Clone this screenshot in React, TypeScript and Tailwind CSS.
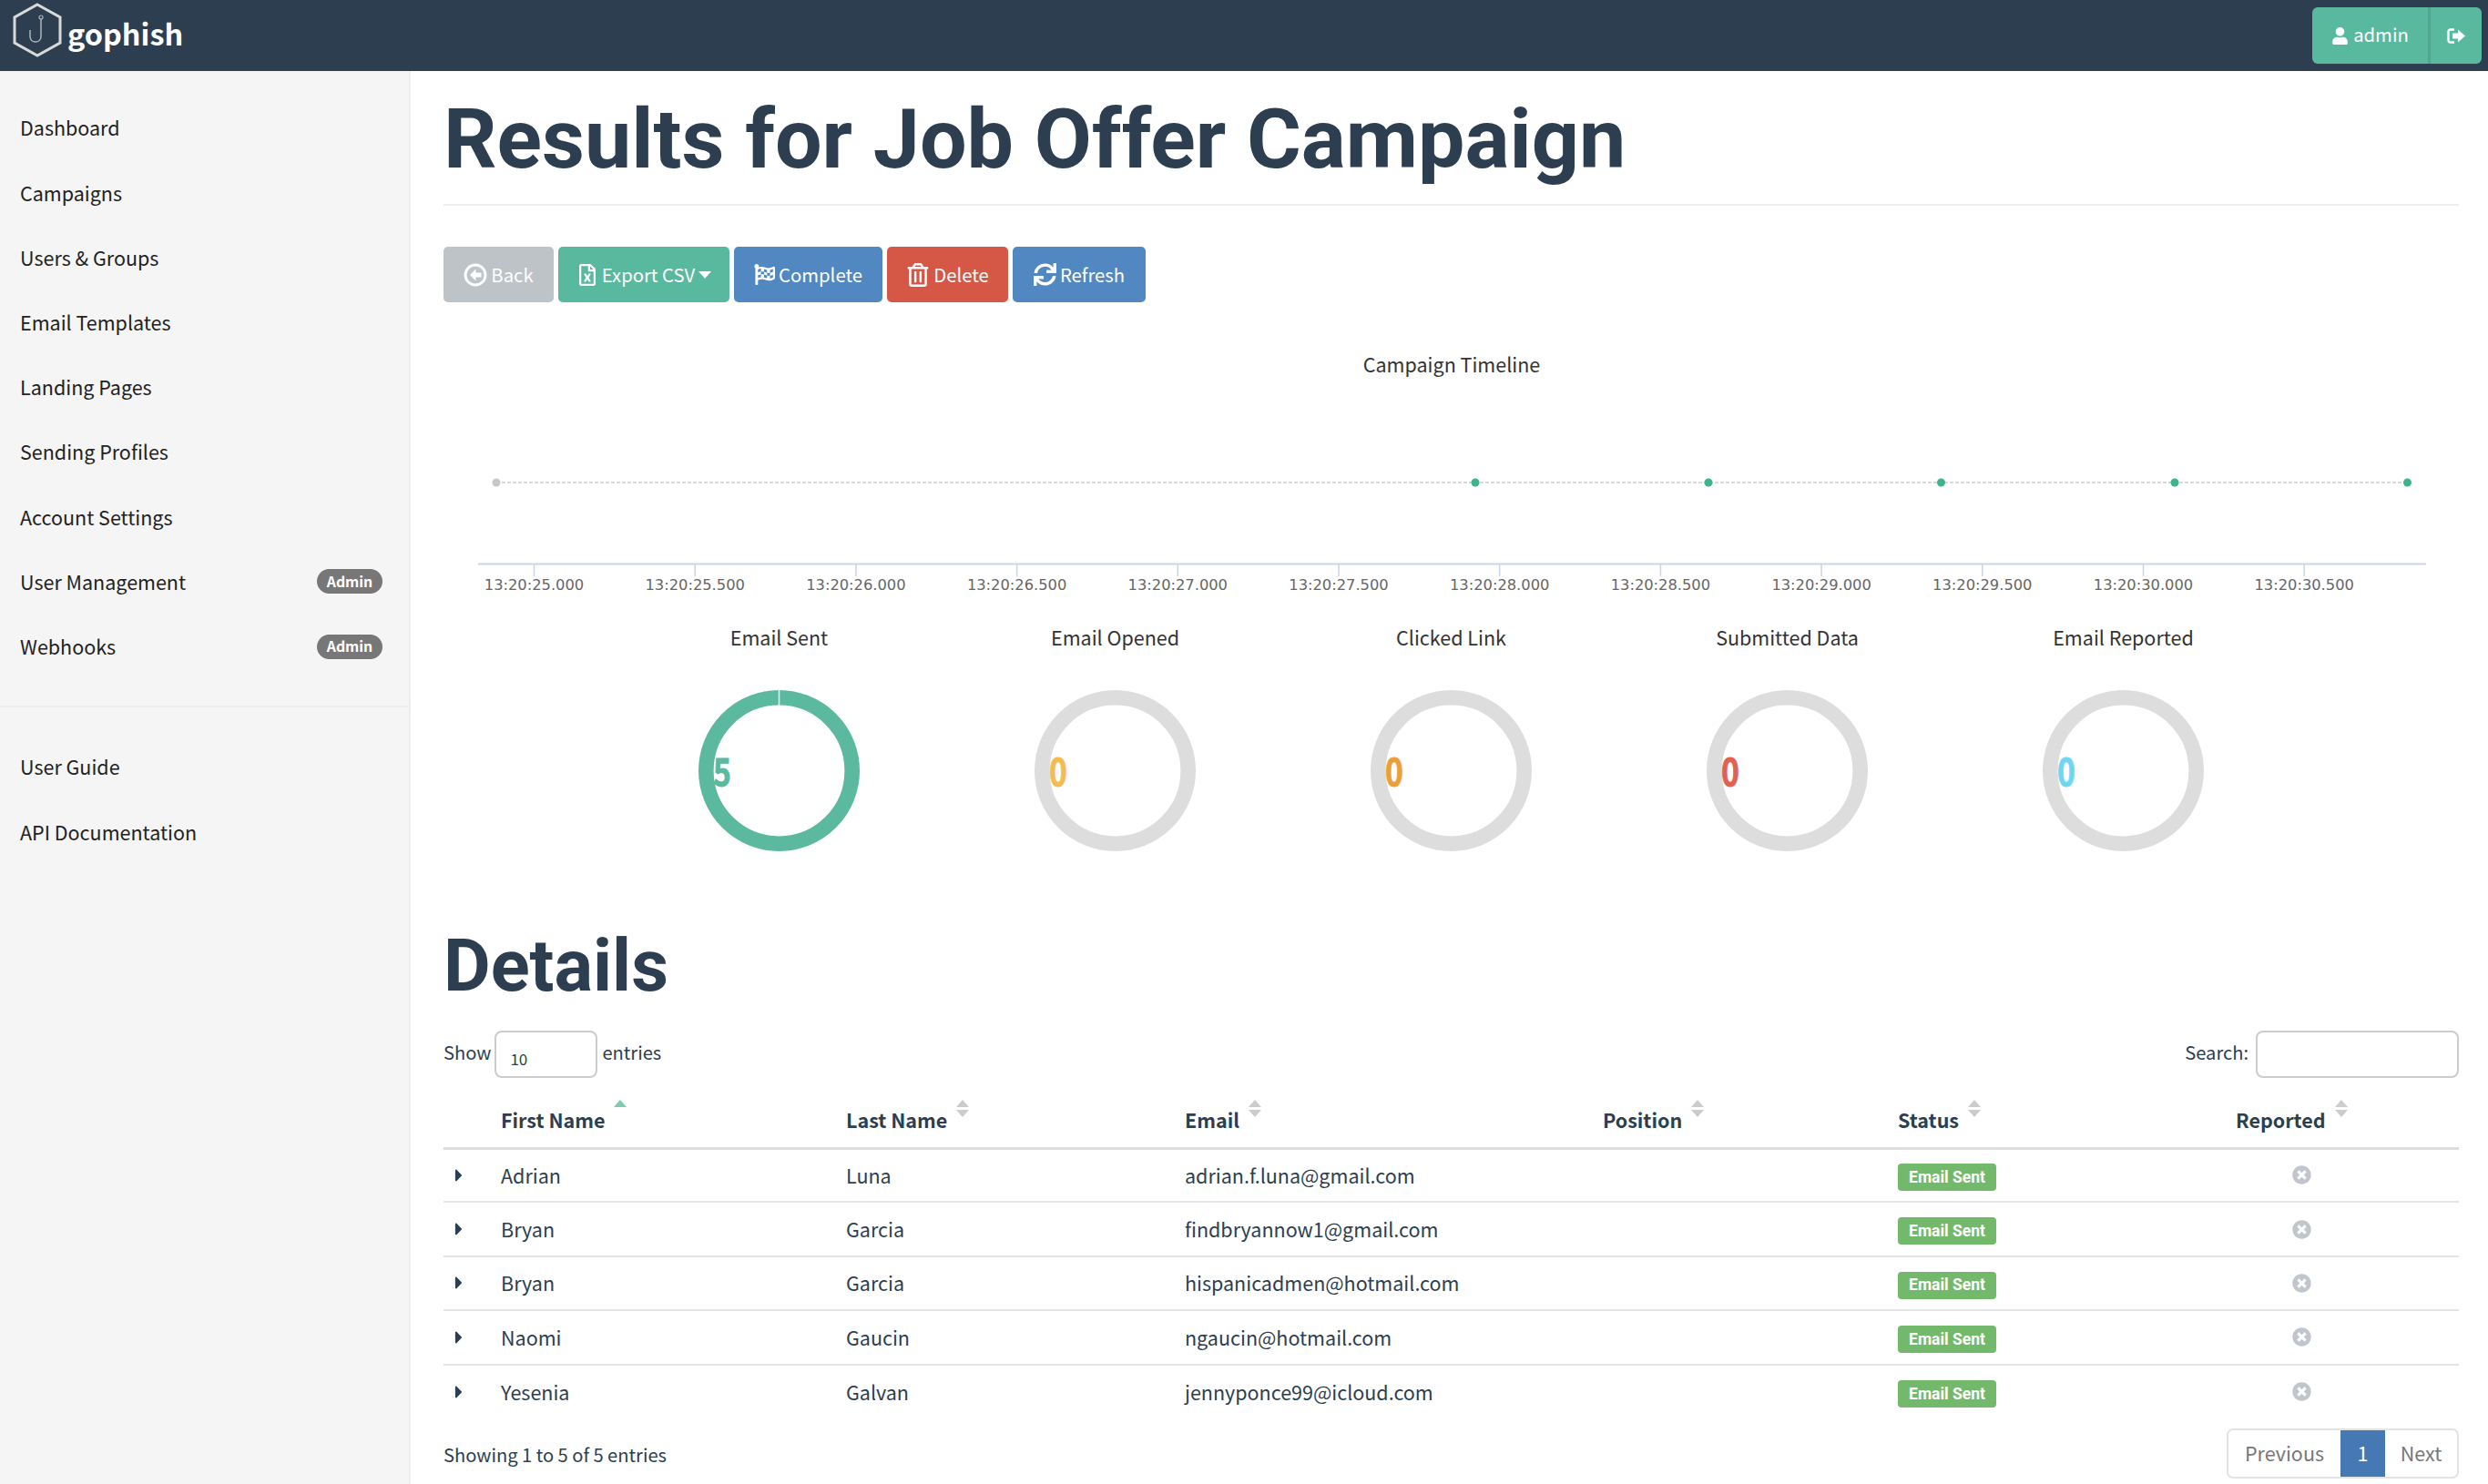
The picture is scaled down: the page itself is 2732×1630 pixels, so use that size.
import React from "react";
import { FaRegFileExcel, FaFlagCheckered, FaRegTrashAlt, FaSync, FaUser, FaTimesCircle, FaCaretRight } from "react-icons/fa";

const src = "font-['Noto_Sans_CJK_SC','Source_Sans_Pro',sans-serif]";

function Logo() {
  return (
    <svg width="58" height="62" viewBox="0 0 58 62" fill="none" className="shrink-0 mb-[12px]">
      <polygon points="29,3 54,17 54,45 29,59 4,45 4,17" stroke="#d8d9da" strokeWidth="3" />
      <path d="M33 19 V38 C33 46 21 46 21 38 V31" stroke="#aeb5ba" strokeWidth="1.5" />
      <circle cx="33" cy="17" r="2" stroke="#aeb5ba" strokeWidth="1.2" />
    </svg>
  );
}

function Sort({ up = false }: { up?: boolean }) {
  return (
    <svg width="16" height="20" viewBox="0 0 16 20" className="absolute top-[-6px] right-[-25px]">
      <polygon points="8,0 15,8 1,8" fill={up ? "#7ccbb2" : "#ccc"} />
      {!up && <polygon points="1,11 15,11 8,19" fill="#ccc" />}
    </svg>
  );
}

function NavItem({ label, admin = false }: { label: string; admin?: boolean }) {
  return (
    <div className="h-[71.2px] flex items-center justify-between pl-[22px] pr-[29px] text-[21.5px] text-[#222]">
      <span>{label}</span>
      {admin && (
        <span className="h-[27px] w-[72px] rounded-full bg-[#777] text-white text-[15.8px] font-bold flex items-center justify-center">Admin</span>
      )}
    </div>
  );
}

function Btn({ bg, w, icon, label }: { bg: string; w: string; icon: React.ReactNode; label: React.ReactNode }) {
  return (
    <button className={`h-[61px] ${w} ${bg} rounded-[5px] text-white text-[20.3px] flex items-center justify-center gap-[4px]`}>
      {icon}
      {label}
    </button>
  );
}

function Donut({ title, value, color, ring }: { title: string; value: string; color: string; ring: string }) {
  return (
    <div className="w-[369px] flex flex-col items-center">
      <div className="h-[32px] leading-[32px] text-[21.5px] text-[#333]">{title}</div>
      <div className="relative w-[177px] h-[177px] mt-[42px]">
        <svg width="177" height="177" viewBox="0 0 177 177">
          <circle cx="88.5" cy="88.5" r="80.2" fill="none" stroke={ring} strokeWidth="16.6" />
          {value === "5" && <line x1="88.5" y1="0" x2="88.5" y2="17" stroke="#fff" strokeWidth="1.5" />}
        </svg>
        <span className="absolute left-[16px] top-[63px] text-[42px] leading-[48px] font-bold origin-left scale-x-[0.8] [-webkit-text-stroke:1px_currentColor]" style={{ color }}>{value}</span>
      </div>
    </div>
  );
}

const rows = [
  ["Adrian", "Luna", "adrian.f.luna@gmail.com"],
  ["Bryan", "Garcia", "findbryannow1@gmail.com"],
  ["Bryan", "Garcia", "hispanicadmen@hotmail.com"],
  ["Naomi", "Gaucin", "ngaucin@hotmail.com"],
  ["Yesenia", "Galvan", "jennyponce99@icloud.com"],
];

const ticks = ["13:20:25.000", "13:20:25.500", "13:20:26.000", "13:20:26.500", "13:20:27.000", "13:20:27.500", "13:20:28.000", "13:20:28.500", "13:20:29.000", "13:20:29.500", "13:20:30.000", "13:20:30.500"];

function Timeline() {
  return (
    <svg width="2213" height="280" viewBox="487 380 2213 280" className="block">
      <text x="1594" y="409" textAnchor="middle" fontSize="21.5" fill="#333" fontFamily="'Noto Sans CJK SC', sans-serif">Campaign Timeline</text>
      <line x1="545" y1="530" x2="2643.5" y2="530" stroke="#ccc" strokeWidth="1.4" strokeDasharray="4 2" />
      <circle cx="545" cy="530" r="4.5" fill="#c8c8c8" />
      {[1620, 1876, 2131.5, 2388, 2643.5].map((x) => (
        <circle key={x} cx={x} cy="530" r="4.5" fill="#3cb48f" />
      ))}
      <line x1="525" y1="619.5" x2="2664" y2="619.5" stroke="#ccd6eb" strokeWidth="1.8" />
      {ticks.map((t, i) => {
        const x = 586.5 + i * 176.7;
        return (
          <g key={t}>
            <line x1={x} y1="620" x2={x} y2="633" stroke="#ccd6eb" strokeWidth="1.6" />
            <text x={x} y="647.5" textAnchor="middle" fontSize="16.3" fill="#666" fontFamily="'DejaVu Sans', sans-serif">{t}</text>
          </g>
        );
      })}
    </svg>
  );
}

export default function App() {
  return (
    <div className={`h-[1630px] overflow-hidden flex flex-col bg-white ${src}`}>
      <header className="h-[78px] shrink-0 bg-[#2c3e50] flex items-center justify-between pl-[12px] pr-[7px]">
        <div className="flex items-center gap-[4px]">
          <Logo />
          <span className="text-white text-[32.4px] font-bold leading-none mb-[5px]">gophish</span>
        </div>
        <div className="h-[62px] flex rounded-[6px] overflow-hidden bg-[#59b99e] text-white">
          <div className="w-[127px] flex items-center justify-center gap-[5px] text-[20.3px]">
            <FaUser size={19} />
            <span className="mb-[3px]">admin</span>
          </div>
          <div className="w-[3px] bg-[#50a78e]" />
          <div className="w-[56px] flex items-center justify-center">
            <svg width="21" height="17" viewBox="0 0 21 17" fill="none">
              <path d="M8 1.5 H4 C2.5 1.5 1.5 2.5 1.5 4 V13 C1.5 14.5 2.5 15.5 4 15.5 H8" stroke="#fff" strokeWidth="2.4" />
              <path d="M12 1.5 L20 8.5 L12 15.5 V11.5 H6 V5.5 H12 Z" fill="#fff" />
            </svg>
          </div>
        </div>
      </header>
      <div className="flex flex-1 min-h-0">
        <aside className="w-[451px] shrink-0 bg-[#f5f5f5] border-r-2 border-[#eeeeee] pt-[27px]">
          {["Dashboard", "Campaigns", "Users & Groups", "Email Templates", "Landing Pages", "Sending Profiles", "Account Settings"].map((l) => (
            <NavItem key={l} label={l} />
          ))}
          <NavItem label="User Management" admin />
          <NavItem label="Webhooks" admin />
          <div className="h-[2px] bg-[#eeeeee] mt-[29px] mb-[30px]" />
          <NavItem label="User Guide" />
          <div className="pt-[1px]"><NavItem label="API Documentation" /></div>
        </aside>
        <main className="flex-1 min-w-0 pl-[36px] pr-[32px] text-[#2c3e50]">
          <h1 className="font-['Roboto',sans-serif] font-bold text-[91.5px] leading-[108px] mt-[21px] pb-[17px] border-b-2 border-[#eeeeee] whitespace-nowrap">Results for Job Offer Campaign</h1>
          <div className="flex gap-[5px] mt-[45px]">
            <Btn bg="bg-[#bdc3c7]" w="w-[121px]" label="Back" icon={
              <svg width="26" height="26" viewBox="0 0 26 26" fill="none">
                <circle cx="13" cy="13" r="11" stroke="#fff" strokeWidth="3" />
                <path d="M13.5 6.5 L7 13 L13.5 19.5 V15.5 H19.5 V10.5 H13.5 Z" fill="#fff" />
              </svg>
            } />
            <Btn bg="bg-[#59b99e]" w="w-[188px]" icon={<FaRegFileExcel size={24} />} label={
              <span className="flex items-center gap-[4px]">Export CSV<svg width="14" height="8" viewBox="0 0 14 8"><polygon points="0,0 14,0 7,8" fill="#fff" /></svg></span>
            } />
            <Btn bg="bg-[#5288c1]" w="w-[163px]" icon={<FaFlagCheckered size={23} />} label="Complete" />
            <Btn bg="bg-[#d55745]" w="w-[133px]" icon={<FaRegTrashAlt size={26} />} label="Delete" />
            <Btn bg="bg-[#5288c1]" w="w-[146px]" icon={<FaSync size={25} />} label="Refresh" />
          </div>
          <div className="mt-[48px]"><Timeline /></div>
          <div className="flex ml-[184px] mt-[24px]">
            <Donut title="Email Sent" value="5" color="#5ab99e" ring="#5ab99e" />
            <Donut title="Email Opened" value="0" color="#f3bc52" ring="#dddddd" />
            <Donut title="Clicked Link" value="0" color="#ea9f38" ring="#dddddd" />
            <Donut title="Submitted Data" value="0" color="#e2604f" ring="#dddddd" />
            <Donut title="Email Reported" value="0" color="#6fd6f2" ring="#dddddd" />
          </div>
          <h2 className="font-['Roboto',sans-serif] font-bold text-[79.5px] leading-[100px] mt-[76px]">Details</h2>
          <div className="flex items-start justify-between mt-[21px] text-[20.1px] h-[51px]">
            <div className="flex items-center h-[48px]">
              Show
              <span className="w-[113px] h-[52px] mt-[4px] ml-[4px] mr-[5px] border-2 border-[#ccc] rounded-[8px] flex items-end pl-[15px] pb-[6px] text-[17px] leading-[26px]">10</span>
              entries
            </div>
            <div className="flex items-center gap-[8px] h-[48px]">
              Search:
              <span className="w-[223px] h-[52px] mt-[4px] border-2 border-[#ccc] rounded-[8px] block" />
            </div>
          </div>
          <table className="w-full table-fixed border-collapse mt-[17px] text-[21.5px]">
            <colgroup>
              <col className="w-[63px]" />
              <col className="w-[379px]" />
              <col className="w-[372px]" />
              <col className="w-[459px]" />
              <col className="w-[324px]" />
              <col className="w-[308px]" />
              <col />
            </colgroup>
            <thead>
              <tr className="h-[61px] border-b-[3px] border-[#dddddd] font-bold text-left">
                <th />
                <th><span className="relative font-bold">First Name<Sort up /></span></th>
                <th><span className="relative font-bold">Last Name<Sort /></span></th>
                <th><span className="relative font-bold">Email<Sort /></span></th>
                <th><span className="relative font-bold">Position<Sort /></span></th>
                <th><span className="relative font-bold">Status<Sort /></span></th>
                <th><span className="relative ml-[63px] font-bold">Reported<Sort /></span></th>
              </tr>
            </thead>
            <tbody>
              {rows.map((r, i) => (
                <tr key={i} className={`h-[59.4px] ${i < 4 ? "border-b-2 border-[#e4e4e4]" : ""}`}>
                  <td className="pl-[6px]"><FaCaretRight size={22} /></td>
                  <td>{r[0]}</td>
                  <td>{r[1]}</td>
                  <td>{r[2]}</td>
                  <td />
                  <td>
                    <span className="inline-flex h-[30px] w-[108px] items-center justify-center rounded-[4px] bg-[#72b96b] text-white font-['Roboto',sans-serif] font-bold text-[17.5px] align-middle">Email Sent</span>
                  </td>
                  <td className="pl-[125px]"><FaTimesCircle size={21} color="#c0c6cc" /></td>
                </tr>
              ))}
            </tbody>
          </table>
          <div className="flex items-center justify-between mt-[11px] text-[20.1px]">
            <span className="pt-[3px]">Showing 1 to 5 of 5 entries</span>
            <div className="flex h-[55px] w-[255px] border-2 border-[#e3e3e3] rounded-[7px] overflow-hidden text-[21.5px] text-[#777]">
              <span className="w-[123px] flex items-center justify-center">Previous</span>
              <span className="w-[49px] flex items-center justify-center bg-[#4679b3] text-white my-[-2px]">1</span>
              <span className="flex-1 flex items-center justify-center">Next</span>
            </div>
          </div>
        </main>
      </div>
    </div>
  );
}
